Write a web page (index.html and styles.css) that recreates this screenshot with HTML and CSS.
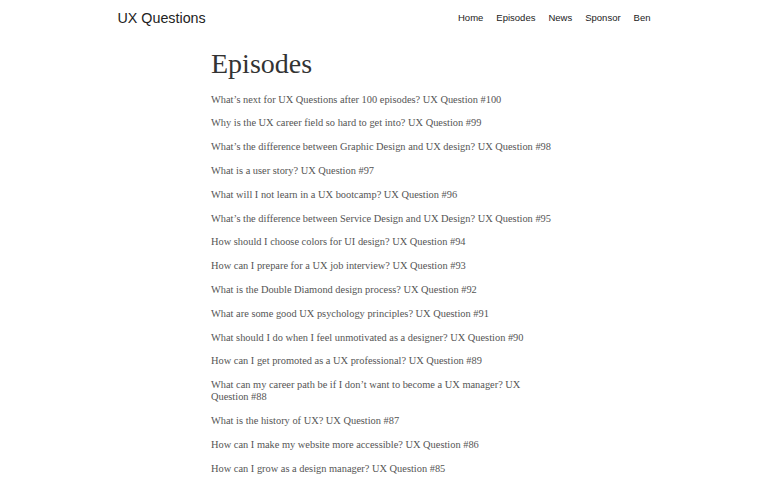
FILE: index.html
```html
<!DOCTYPE html>
<html lang="en">
<head>
<meta charset="utf-8">
<title>Episodes - UX Questions</title>
<link rel="stylesheet" href="styles.css">
</head>
<body>
<header class="site-header">
  <a class="brand" href="#">UX Questions</a>
  <nav class="nav">
    <a href="#">Home</a>
    <a href="#">Episodes</a>
    <a href="#">News</a>
    <a href="#">Sponsor</a>
    <a href="#">Ben</a>
  </nav>
</header>
<main class="content">
  <h1 class="page-title">Episodes</h1>
  <ul class="episodes">
    <li><a href="#">What’s next for UX Questions after 100 episodes? UX Question #100</a></li>
    <li><a href="#">Why is the UX career field so hard to get into? UX Question #99</a></li>
    <li><a href="#">What’s the difference between Graphic Design and UX design? UX Question #98</a></li>
    <li><a href="#">What is a user story? UX Question #97</a></li>
    <li><a href="#">What will I not learn in a UX bootcamp? UX Question #96</a></li>
    <li><a href="#">What’s the difference between Service Design and UX Design? UX Question #95</a></li>
    <li><a href="#">How should I choose colors for UI design? UX Question #94</a></li>
    <li><a href="#">How can I prepare for a UX job interview? UX Question #93</a></li>
    <li><a href="#">What is the Double Diamond design process? UX Question #92</a></li>
    <li><a href="#">What are some good UX psychology principles? UX Question #91</a></li>
    <li><a href="#">What should I do when I feel unmotivated as a designer? UX Question #90</a></li>
    <li><a href="#">How can I get promoted as a UX professional? UX Question #89</a></li>
    <li><a href="#">What can my career path be if I don’t want to become a UX manager? UX Question #88</a></li>
    <li><a href="#">What is the history of UX? UX Question #87</a></li>
    <li><a href="#">How can I make my website more accessible? UX Question #86</a></li>
    <li><a href="#">How can I grow as a design manager? UX Question #85</a></li>
  </ul>
</main>
</body>
</html>
```
FILE: styles.css
```css
* { box-sizing: border-box; }
html, body { margin: 0; padding: 0; background: #fff; }
body { font-family: "Liberation Serif", serif; color: #555; }
a { color: inherit; text-decoration: none; }

.site-header {
  max-width: 533px;
  margin: 0 auto;
  height: 35px;
  display: flex;
  align-items: center;
  justify-content: space-between;
  font-family: "Liberation Sans", Arial, sans-serif;
}
.brand { font-size: 14.3px; color: #222; }
.nav { display: flex; gap: 13px; font-size: 9.5px; color: #222; }

.content { max-width: 346px; margin: 0 auto; }
.page-title {
  font-family: "Liberation Serif", serif;
  font-weight: 400;
  font-size: 28px;
  color: #333;
  margin: 12px 0 13px;
  line-height: 1.2;
}
.episodes { list-style: none; margin: 0; padding: 0; display: flex; flex-direction: column; gap: 11.8px; }
.episodes li { font-size: 10.4px; line-height: 12px; }
```
